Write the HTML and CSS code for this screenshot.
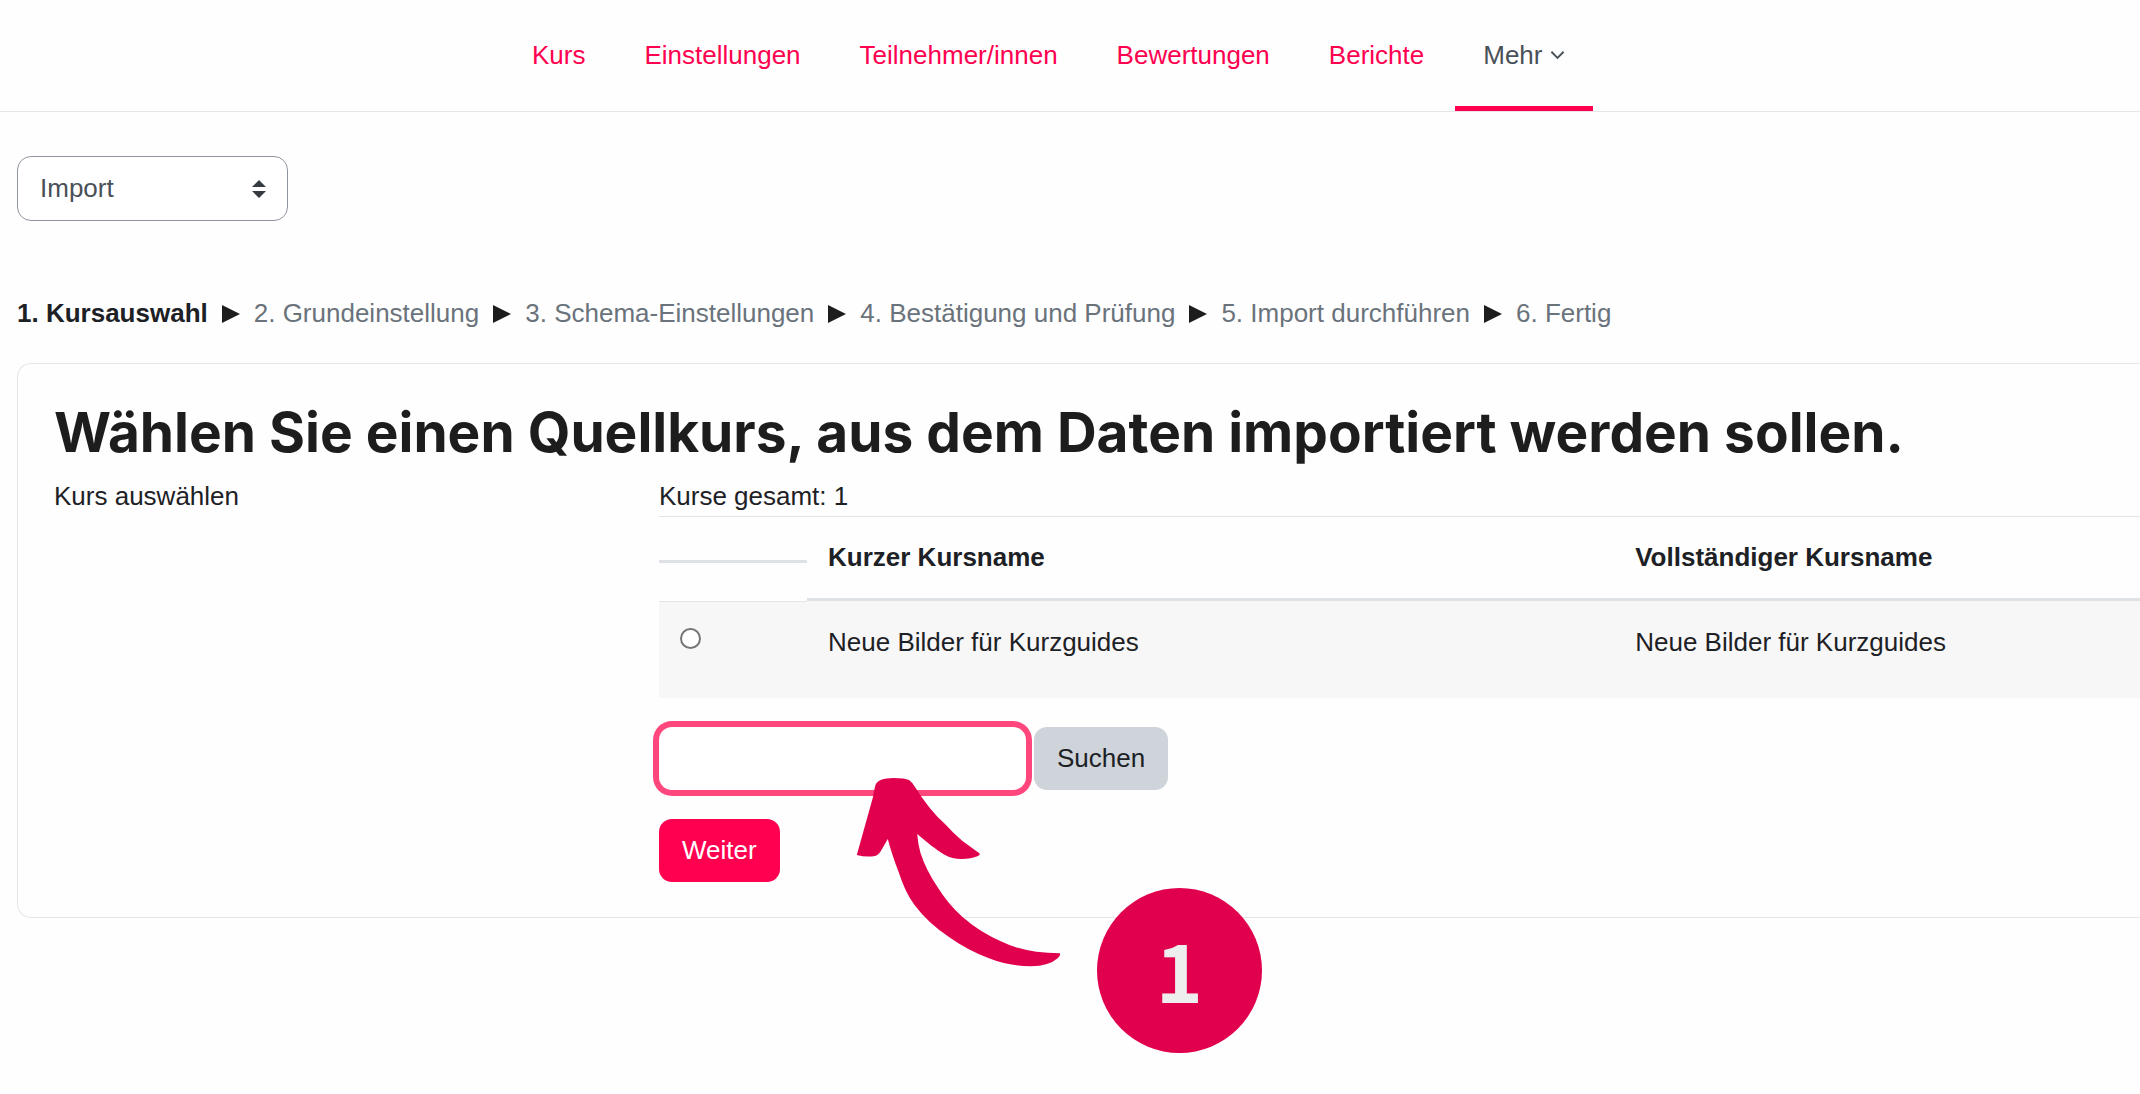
FILE: index.html
```html
<!DOCTYPE html>
<html lang="de">
<head>
  <meta charset="utf-8">
  <title>Kurs importieren</title>
  <link rel="stylesheet" href="styles.css">
</head>

<body>

  <nav class="course-nav">
    <ul class="nav-list">
      <li><a href="#" class="nav-link">Kurs</a></li>
      <li><a href="#" class="nav-link">Einstellungen</a></li>
      <li><a href="#" class="nav-link">Teilnehmer/innen</a></li>
      <li><a href="#" class="nav-link">Bewertungen</a></li>
      <li><a href="#" class="nav-link">Berichte</a></li>
      <li>
        <a href="#" class="nav-link active">Mehr
          <svg class="chevron" viewBox="0 0 16 10" aria-hidden="true"><path d="M1.5 1.5 L8 8 L14.5 1.5"/></svg>
        </a>
      </li>
    </ul>
  </nav>

  <main>
    <div class="select-wrap">
      <select class="action-select" aria-label="Aktion">
        <option>Import</option>
      </select>
      <svg class="select-icon" viewBox="0 0 14 18" aria-hidden="true"><path d="M7 0 L14 7 H0 Z M0 11 H14 L7 18 Z"/></svg>
    </div>

    <div class="progress">
      <span class="current">1. Kursauswahl</span>
      <svg class="sep" viewBox="0 0 18 18" aria-hidden="true"><path d="M0 0 L18 9 L0 18 Z"/></svg>
      <span>2. Grundeinstellung</span>
      <svg class="sep" viewBox="0 0 18 18" aria-hidden="true"><path d="M0 0 L18 9 L0 18 Z"/></svg>
      <span>3. Schema-Einstellungen</span>
      <svg class="sep" viewBox="0 0 18 18" aria-hidden="true"><path d="M0 0 L18 9 L0 18 Z"/></svg>
      <span>4. Bestätigung und Prüfung</span>
      <svg class="sep" viewBox="0 0 18 18" aria-hidden="true"><path d="M0 0 L18 9 L0 18 Z"/></svg>
      <span>5. Import durchführen</span>
      <svg class="sep" viewBox="0 0 18 18" aria-hidden="true"><path d="M0 0 L18 9 L0 18 Z"/></svg>
      <span>6. Fertig</span>
    </div>

    <section class="card">
      <h2>Wählen Sie einen Quellkurs, aus dem Daten importiert werden sollen.</h2>

      <form class="import-form">
        <div>Kurs auswählen</div>
        <div>
          <div>Kurse gesamt: 1</div>
          <table class="courses">
            <thead>
              <tr>
                <td class="col-radio"><div class="empty-head"></div></td>
                <th class="col-short">Kurzer Kursname</th>
                <th>Vollständiger Kursname</th>
              </tr>
            </thead>
            <tbody>
              <tr>
                <td><input type="radio" name="importid" class="course-radio" aria-label="Neue Bilder für Kurzguides"></td>
                <td>Neue Bilder für Kurzguides</td>
                <td>Neue Bilder für Kurzguides</td>
              </tr>
            </tbody>
          </table>

          <div class="search">
            <input type="text" class="search-input" aria-label="Kurse suchen">
            <button type="button" class="btn btn-secondary">Suchen</button>

            <!-- Step marker -->
            <svg class="arrow" viewBox="0 0 220 200" aria-hidden="true">
              <path d="M7.8 85 L24 27 Q25 20 26.500 15 Q29 8 44.500 8 Q56 8 60 10 Q63 12 66 17 Q81 41 96 54 Q105 64 113.500 71 L130 83 Q132 84 129 86 Q122 89 112.500 89 Q103 89 96 85 C86 79 79 73 68.200 64 Q69 74 71.500 83 Q77 100 88.500 117 Q99 134 113.500 147 Q132 163 153.500 172 Q176 183 211 183.300 Q211.500 186 209 188 Q200 196 182 196.300 Q159 196 140 188.300 Q118 180 100 167 Q79 153 65.500 135 Q56 122 50 103 Q43 85 38.800 69 L33 79 Q30 85 26 86 Q17 87.500 7.800 85 Z"/>
            </svg>
            <div class="step-badge">1</div>
          </div>

          <button type="button" class="btn btn-primary">Weiter</button>
        </div>
      </form>
    </section>
  </main>

</body>
</html>
```

FILE: styles.css
```css
* {
  box-sizing: border-box;
}
body {
  margin: 0;
  min-height: 100vh;
  background: #fefefe;
  color: #1d2125;
  font-family: "Liberation Sans", Arial, sans-serif;
  font-size: 26px;
  line-height: 39px;
}

/* Navigation */
.course-nav {
  border-bottom: 1px solid #e6e6e6;
}
.nav-list {
  display: flex;
  gap: 3px;
  max-width: 1132px;
  margin: 0 auto;
  padding: 0;
  list-style: none;
}
.nav-link {
  display: flex;
  align-items: center;
  gap: 8px;
  height: 111px;
  padding: 4px 28px 0;
  border-bottom: 5px solid transparent;
  color: #ff0050;
  text-decoration: none;
}
.nav-link.active {
  border-color: #ff0050;
  color: #495057;
}
.chevron {
  width: 15px;
  height: 10px;
  fill: none;
  stroke: #495057;
  stroke-width: 2;
}

main {
  padding: 44px 0 0 17px;
}
.select-wrap {
  position: relative;
  width: 271px;
}
.action-select {
  display: block;
  width: 100%;
  height: 65px;
  padding: 0 22px;
  border: 1px solid #8f959e;
  border-radius: 14px;
  background: #fff;
  color: #495057;
  font: inherit;
  appearance: none;
}
.select-icon {
  position: absolute;
  top: 24px;
  right: 22px;
  width: 14px;
  height: 18px;
  fill: #343a40;
  pointer-events: none;
}

/* Import steps */
.progress {
  display: flex;
  align-items: center;
  gap: 14px;
  margin: 73px 0 30px;
  color: #6a737b;
}
.current {
  color: #1d2125;
  font-weight: bold;
}
.sep {
  width: 18px;
  height: 18px;
  fill: #1d1d1d;
}

.card {
  padding: 35px 0 35px 36px;
  border: 1px solid #e6e6e6;
  border-right: 0;
  border-radius: 14px 0 0 14px;
}
h2 {
  margin: 0 0 11px;
  color: #1d1d1d;
  font-family: Inter, sans-serif;
  font-size: 55px;
  line-height: 67px;
}
.import-form {
  display: grid;
  grid-template-columns: 29% 1fr;
}

.courses {
  width: 100%;
  border-spacing: 0;
  table-layout: fixed;
}
.courses th,
.courses td {
  padding: 21px;
  border-top: 1px solid #e3e6e9;
  text-align: left;
  vertical-align: top;
}
.courses th {
  border-bottom: 3px solid #dee2e6;
}
.courses .col-radio {
  width: 10%;
  padding: 0;
}
.courses .col-short {
  width: 54.5%;
}
.empty-head {
  height: 46px;
  border-bottom: 3px solid #dee2e6;
}
.courses tbody td {
  padding-bottom: 36px;
  background: #f7f7f7;
}
.courses tbody td + td {
  border-top-color: #f7f7f7;
}
.course-radio {
  display: block;
  width: 21px;
  height: 21px;
  margin: 5px 0 0;
  border: 2px solid #767676;
  border-radius: 50%;
  background: #fff;
  appearance: none;
}
.course-radio:checked {
  border: 6px solid #ff0050;
}

/* Search */
.search {
  position: relative;
  display: flex;
  gap: 8px;
  margin: 29px 0;
}
.search-input {
  width: 367px;
  height: 63px;
  padding: 0 20px;
  border: 0;
  border-radius: 13px;
  background: #fff;
  box-shadow: 0 0 0 6px #ff477e;
  font: inherit;
}
.btn {
  height: 63px;
  padding: 0 23px;
  border: 0;
  border-radius: 13px;
  font: inherit;
}
.btn-secondary {
  background: #ced4da;
  color: #1d2125;
}
.btn-primary {
  display: block;
  background: #ff0050;
  color: #fff;
}

.arrow {
  position: absolute;
  top: 43px;
  left: 190px;
  width: 220px;
  height: 200px;
  fill: #e1004d;
}
.step-badge {
  position: absolute;
  top: 161px;
  left: 438px;
  width: 165px;
  height: 165px;
  border-radius: 50%;
  background: #e1004d;
  color: #eee;
  font-family: "Noto Sans CJK SC", sans-serif;
  font-size: 80px;
  font-weight: bold;
  line-height: 160px;
  text-align: center;
}
```
